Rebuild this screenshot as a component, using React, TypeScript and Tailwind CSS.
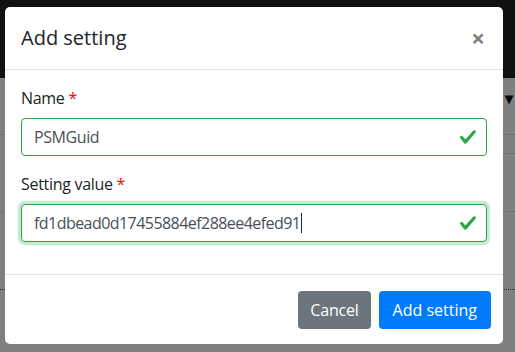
import type { ReactNode } from "react";

const font = { fontFamily: '"Open Sans", "Noto Sans", sans-serif' };

function ValidCheck() {
  return (
    <svg viewBox="0 0 8 8" className="h-[18px] w-[18px] shrink-0">
      <path
        fill="#28a745"
        d="M2.3 6.73L.6 4.53c-.4-1.04.46-1.4 1.1-.8l1.1 1.4 3.4-3.8c.6-.63 1.6-.27 1.2.7l-4 4.6c-.43.5-.8.4-1.1.1z"
      />
    </svg>
  );
}

function Field({ label, children }: { label: string; children: ReactNode }) {
  return (
    <div className="mb-4">
      <label className="mb-2 block text-base leading-6 tracking-[-0.3px] text-[#212529]">
        {label} <span className="text-[#ff0000]">*</span>
      </label>
      {children}
    </div>
  );
}

function BackgroundPage() {
  return (
    <div className="h-[352px] w-[515px] bg-white">
      <div className="h-[78px] bg-[#222]" />
      <div className="flex h-[57px] items-start justify-end border-b border-[#dee2e6] pr-[2px] pt-[8px]">
        <span className="text-base font-bold leading-6 text-[#111]">⇕▾</span>
      </div>
      <div className="ml-[480px] h-[19px] border-b border-[#dee2e6]" />
      <div className="h-[58px] border-b border-[#dee2e6]" />
      <div className="mt-[77px] border-b border-dotted border-[#555]" />
    </div>
  );
}

export default function App() {
  return (
    <div className="relative h-[352px] w-[515px] overflow-hidden" style={font}>
      <BackgroundPage />
      <div className="absolute inset-0 bg-black/50" />
      <div className="absolute inset-0 px-[5px] pt-[7px]">
        <div className="flex w-[498px] flex-col rounded-[5px] bg-white">
          <div className="flex items-start justify-between border-b border-[#dee2e6] p-4">
            <h5 className="text-xl font-medium leading-[30px] text-[#212529]">Add setting</h5>
            <button
              type="button"
              className="-m-4 p-4 pr-[18px] text-2xl font-bold leading-[30px] text-black opacity-50"
              aria-label="Close"
            >
              ×
            </button>
          </div>

          <div className="p-4">
            <Field label="Name">
              <div className="flex h-[38px] items-center rounded-[4px] border border-[#28a745] pl-3 pr-[9px]">
                <input
                  readOnly
                  value="PSMGuid"
                  className="min-w-0 flex-1 bg-transparent text-base leading-6 tracking-[-0.4px] text-[#495057] outline-none"
                  style={font}
                />
                <ValidCheck />
              </div>
            </Field>
            <Field label="Setting value">
              <div className="flex h-[38px] items-center rounded-[4px] border border-[#28a745] pl-3 pr-[9px] shadow-[0_0_0_3.2px_rgba(40,167,69,0.25)]">
                <div className="flex min-w-0 flex-1 items-center text-base leading-6 tracking-[-0.55px] text-[#495057]">
                  <span>fd1dbead0d17455884ef288ee4efed91</span>
                  <span className="ml-px h-[20px] w-px bg-[#212529]" />
                </div>
                <ValidCheck />
              </div>
            </Field>
          </div>

          <div className="flex items-center justify-end gap-2 border-t border-[#dee2e6] px-3 pb-[15px] pt-4">
            <button
              type="button"
              className="h-[38px] rounded-[4px] bg-[#6c757d] px-3 text-base leading-6 tracking-[-0.2px] text-white"
            >
              Cancel
            </button>
            <button
              type="button"
              className="h-[38px] rounded-[4px] bg-[#007bff] px-[14px] text-base leading-6 text-white"
            >
              Add setting
            </button>
          </div>
        </div>
      </div>
    </div>
  );
}
